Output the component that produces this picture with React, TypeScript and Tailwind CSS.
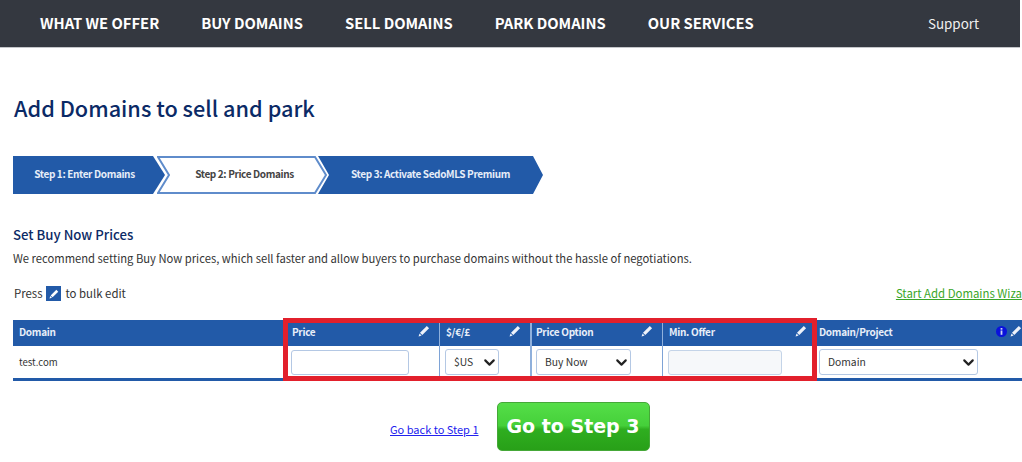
import { ChevronDown } from "lucide-react";

const font = "font-['Noto_Sans_CJK_SC','Noto_Sans',sans-serif]";
const columns = "grid-cols-[271px_155px_91px_132px_154px_206px]";

function Pencil({ className }: { className?: string }) {
  return (
    <svg viewBox="0 0 12 12" className={className} fill="currentColor">
      <path d="M8.8 0.9 11.1 3.2 4.3 10 2 7.7Z" />
      <path d="M1.5 8.4 3.6 10.5 0.6 11.4Z" />
    </svg>
  );
}

function InfoDot() {
  return (
    <svg viewBox="0 0 11 11" className="mb-[4px] h-[11px] w-[11px]">
      <circle cx="5.5" cy="5.5" r="5.5" fill="#0a12dc" />
      <rect x="4.6" y="2" width="1.8" height="1.7" fill="#c8d4f4" />
      <rect x="4.6" y="4.5" width="1.8" height="4.3" fill="#c8d4f4" />
    </svg>
  );
}

// chevron shapes for the step bar, first and last are solid, the middle one is outlined
function StepShape({ kind, width }: { kind: "first" | "middle" | "last"; width: number }) {
  const points =
    kind === "first"
      ? `0,0 ${width - 12},0 ${width},19 ${width - 12},38 0,38`
      : kind === "last"
        ? `0,0 ${width - 10},0 ${width},19 ${width - 10},38 0,38 11,19`
        : `1,1 ${width - 12},1 ${width - 1},19 ${width - 12},37 1,37 12,19`;
  return (
    <svg className="absolute inset-0" width={width} height={38}>
      {kind === "middle" ? (
        <polygon points={points} fill="#fff" stroke="#5f8ccb" strokeWidth="2" />
      ) : (
        <polygon points={points} fill="#225aa8" />
      )}
    </svg>
  );
}

function Step({
  label,
  kind,
  className,
  width,
}: {
  label: string;
  kind: "first" | "middle" | "last";
  className: string;
  width: number;
}) {
  return (
    <div className={`relative flex h-[38px] shrink-0 items-center justify-center pb-[3px] ${className}`}>
      <StepShape kind={kind} width={width} />
      <span
        className={`relative text-[10px] font-semibold tracking-[-0.37px] ${kind === "middle" ? "text-[#444]" : "text-[#e6edf8]"}`}
      >
        {label}
      </span>
    </div>
  );
}

function HeaderCell({ label, className }: { label: string; className?: string }) {
  return (
    <div className={`flex items-center justify-between pr-[9px] ${className ?? ""}`}>
      <span className="pb-[4px] text-[10px] font-semibold tracking-[-0.3px] text-[#e8eef8]">{label}</span>
      <Pencil className="mb-[5px] h-[12px] w-[12px] text-[#eef2fa]" />
    </div>
  );
}

function Select({ label, className }: { label: string; className: string }) {
  return (
    <div
      className={`flex h-[26px] items-center justify-between rounded-[3px] border border-[#b4c8e4] bg-white pl-[8px] text-[10.3px] text-[#333] ${className}`}
    >
      <span>{label}</span>
      <ChevronDown size={17} strokeWidth={3} className="text-[#222]" />
    </div>
  );
}

export default function App() {
  return (
    <div className={`h-[462px] w-[1022px] overflow-hidden bg-white ${font}`}>
      <nav className="flex h-[48px] w-[1020px] items-center justify-between border-b border-[#c4c6ca] bg-[#343840] pb-[1px] pl-[40px] pr-[41px] text-white">
        <div className="flex gap-[42px] text-[14.75px] font-semibold">
          <a>WHAT WE OFFER</a>
          <a>BUY DOMAINS</a>
          <a>SELL DOMAINS</a>
          <a>PARK DOMAINS</a>
          <a>OUR SERVICES</a>
        </div>
        <a className="text-[13.4px] text-[#f0f0f0]">Support</a>
      </nav>

      <main className="pl-[13px]">
        <h1 className="ml-[1px] mt-[42px] h-[36px] text-[21.7px] font-medium leading-[36px] text-[#0b2a66]">
          Add Domains to sell and park
        </h1>

        <div className="mt-[30px] flex">
          <Step label="Step 1: Enter Domains" kind="first" className="w-[152px] pr-[9px]" width={152} />
          <Step label="Step 2: Price Domains" kind="middle" className="z-10 -ml-[8px] w-[170px] pl-[5px]" width={170} />
          <Step label="Step 3: Activate SedoMLS Premium" kind="last" className="-ml-[9px] w-[225px]" width={225} />
        </div>

        <h2 className="mt-[31px] text-[13.2px] font-medium leading-[20px] text-[#0b2a66]">Set Buy Now Prices</h2>
        <p className="mt-[3px] text-[11.22px] leading-[20px] text-[#333]">
          We recommend setting Buy Now prices, which sell faster and allow buyers to purchase domains without the hassle
          of negotiations.
        </p>

        <div className="mt-[16px] flex h-[20px] items-center justify-between whitespace-nowrap">
          <div className="flex items-center pl-[1px] text-[11.4px] text-[#333]">
            Press
            <span className="mx-[4px] flex h-[15px] w-[15px] items-center justify-center bg-[#225aa8]">
              <Pencil className="h-[10px] w-[10px] text-white" />
            </span>
            to bulk edit
          </div>
          <a className="text-[11.4px] text-[#3aa629] underline">Start Add Domains Wiza</a>
        </div>

        <div className="relative mt-[16px] w-[1009px]">
          <div className={`grid h-[26px] ${columns} bg-[#225aa8]`}>
            <div className="flex items-center pb-[4px] pl-[6px] text-[10px] font-semibold tracking-[-0.3px] text-[#e8eef8]">
              Domain
            </div>
            <HeaderCell label="Price" className="pl-[8px]" />
            <HeaderCell label="$/€/£" className="border-l border-[#8fb0dc] pl-[6px]" />
            <HeaderCell label="Price Option" className="border-l-2 border-[#8fb0dc] pl-[4px]" />
            <HeaderCell label="Min. Offer" className="border-l border-[#8fb0dc] pl-[6px]" />
            <div className="flex items-center justify-between pl-[3px]">
              <span className="pb-[4px] text-[10px] font-semibold tracking-[-0.3px] text-[#e8eef8]">Domain/Project</span>
              <div className="flex items-center gap-[3px]">
                <InfoDot />
                <Pencil className="mb-[5px] h-[12px] w-[12px] text-[#eef2fa]" />
              </div>
            </div>
          </div>
          <div className={`grid h-[35px] ${columns} items-center border-b-[3px] border-[#225aa8]`}>
            <span className="pl-[6px] text-[9.6px] text-[#333]">test.com</span>
            <div className="pl-[7px]">
              <input className="block h-[25px] w-[118px] rounded-[3px] border border-[#b4c8e4] bg-white" />
            </div>
            <div className="flex h-full items-center border-l border-[#7ea3d6] pl-[5px]">
              <Select label="$US" className="w-[54px]" />
            </div>
            <div className="flex h-full items-center border-l-2 border-[#8fb0dc] pl-[4px]">
              <Select label="Buy Now" className="w-[95px]" />
            </div>
            <div className="flex h-full items-center border-l border-[#7ea3d6] pl-[5px]">
              <input className="block h-[25px] w-[114px] rounded-[3px] border border-[#c4d4e8] bg-[#f6f8fa]" />
            </div>
            <div className="pl-[3px]">
              <Select label="Domain" className="w-[159px]" />
            </div>
          </div>
          <div className="pointer-events-none absolute left-[270px] top-[-2px] h-[63px] w-[534px] border-[5px] border-[#e2202c]" />
        </div>

        <div className="mt-[21px] flex items-center pl-[377px]">
          <a className="mr-[18px] mt-[6px] text-[11px] text-[#2222ee] underline">Go back to Step 1</a>
          <button className="h-[49px] w-[153px] rounded-[5px] border border-[#45a838] bg-[linear-gradient(#55de48_0%,#45d03a_48%,#2fae20_56%,#28a018_100%)] text-center font-['DejaVu_Sans',sans-serif] text-[19px] font-bold text-white">
            Go to Step 3
          </button>
        </div>
      </main>
    </div>
  );
}
